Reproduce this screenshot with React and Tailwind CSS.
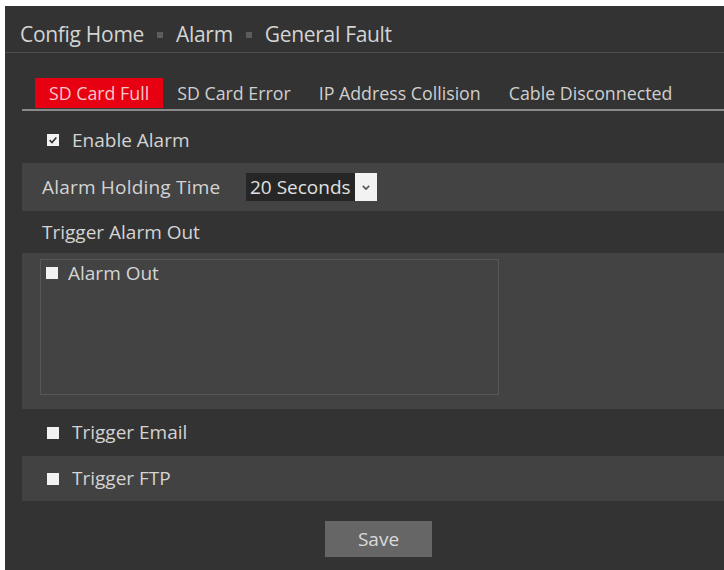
import { useState } from 'react';

const tabs = ['SD Card Full', 'SD Card Error', 'IP Address Collision', 'Cable Disconnected'];

const Box = ({ checked }) => (
  <span className="inline-flex items-center justify-center w-[12px] h-[12px] bg-[#f2f2f2] shrink-0">
    {checked && (
      <svg viewBox="0 0 12 12" className="w-[10px] h-[10px]">
        <path d="M2 6.2 L4.8 9 L10 3" fill="none" stroke="#333" strokeWidth="2" />
      </svg>
    )}
  </span>
);

const App = () => {
  const [active, setActive] = useState(0);

  return (
    <div className="w-[724px] h-[570px] bg-white pl-[5px] pt-[6px] overflow-hidden" style={{ fontFamily: '"Open Sans", "Liberation Sans", sans-serif' }}>
      <div className="h-full bg-[#333333] text-[#d4d4d4] flex flex-col">
        {/* header */}
        <div className="h-[47px] border-b border-[#4f4f4f] flex items-center pt-[12px] pl-[15px] text-[21px] tracking-[-0.3px]">
          <span>Config Home</span>
          <span className="mx-[13px] w-[6px] h-[6px] bg-[#5c5c5c]" />
          <span>Alarm</span>
          <span className="mx-[13px] w-[6px] h-[6px] bg-[#5c5c5c]" />
          <span>General Fault</span>
        </div>

        <div className="pl-[17px] flex flex-col flex-1">
          {/* tabs */}
          <div className="mt-[25px] flex pl-[13px] border-b-2 border-[#8a8a8a] h-[33px]">
            {tabs.map((t, i) => (
              <button
                key={t}
                onClick={() => setActive(i)}
                className={`h-[30px] px-[14px] text-[17.8px] ${i === active ? 'bg-[#e60012] text-[#f4c8c8]' : 'text-[#cfcfcf]'}`}
              >
                {t}
              </button>
            ))}
          </div>

          {/* enable alarm */}
          <div className="h-[48px] flex items-center pt-[10px] pl-[25px] gap-[13px] text-[19px]">
            <Box checked />
            <span>Enable Alarm</span>
          </div>

          {/* holding time */}
          <div className="mt-[4px] h-[48px] bg-[#434343] flex items-center pl-[20px] text-[19px]">
            <span className="w-[204px] tracking-[0.2px]">Alarm Holding Time</span>
            <div className="flex items-stretch h-[28px]">
              <span className="bg-[#262626] pl-[4px] pr-[4px] flex items-center text-[19px] text-[#e0e0e0]">20 Seconds</span>
              <span className="bg-[#f2f2f2] w-[22px] flex items-center justify-center">
                <svg viewBox="0 0 10 6" className="w-[8px] h-[5px]">
                  <path d="M1 1 L5 5 L9 1" fill="none" stroke="#555" strokeWidth="2" />
                </svg>
              </span>
            </div>
          </div>

          {/* trigger alarm out */}
          <div className="h-[42px] flex items-center pl-[20px] text-[19px]">Trigger Alarm Out</div>

          <div className="h-[156px] bg-[#434343] pl-[18px] pt-[6px]">
            <div className="w-[459px] h-[136px] border border-[#575757] pl-[5px] flex items-start text-[19px]">
              <div className="flex items-center gap-[10px] h-[26px]">
                <Box />
                <span>Alarm Out</span>
              </div>
            </div>
          </div>

          {/* email */}
          <div className="h-[47px] flex items-center pl-[25px] gap-[13px] text-[19px]">
            <Box />
            <span>Trigger Email</span>
          </div>

          {/* ftp */}
          <div className="h-[45px] bg-[#424242] flex items-center pl-[25px] gap-[13px] text-[19px]">
            <Box />
            <span>Trigger FTP</span>
          </div>

          <div className="pt-[20px] pl-[303px]">
            <button className="w-[107px] h-[36px] bg-[#666666] text-[#dadada] text-[19px]">Save</button>
          </div>
        </div>
      </div>
    </div>
  );
};

export default App;
